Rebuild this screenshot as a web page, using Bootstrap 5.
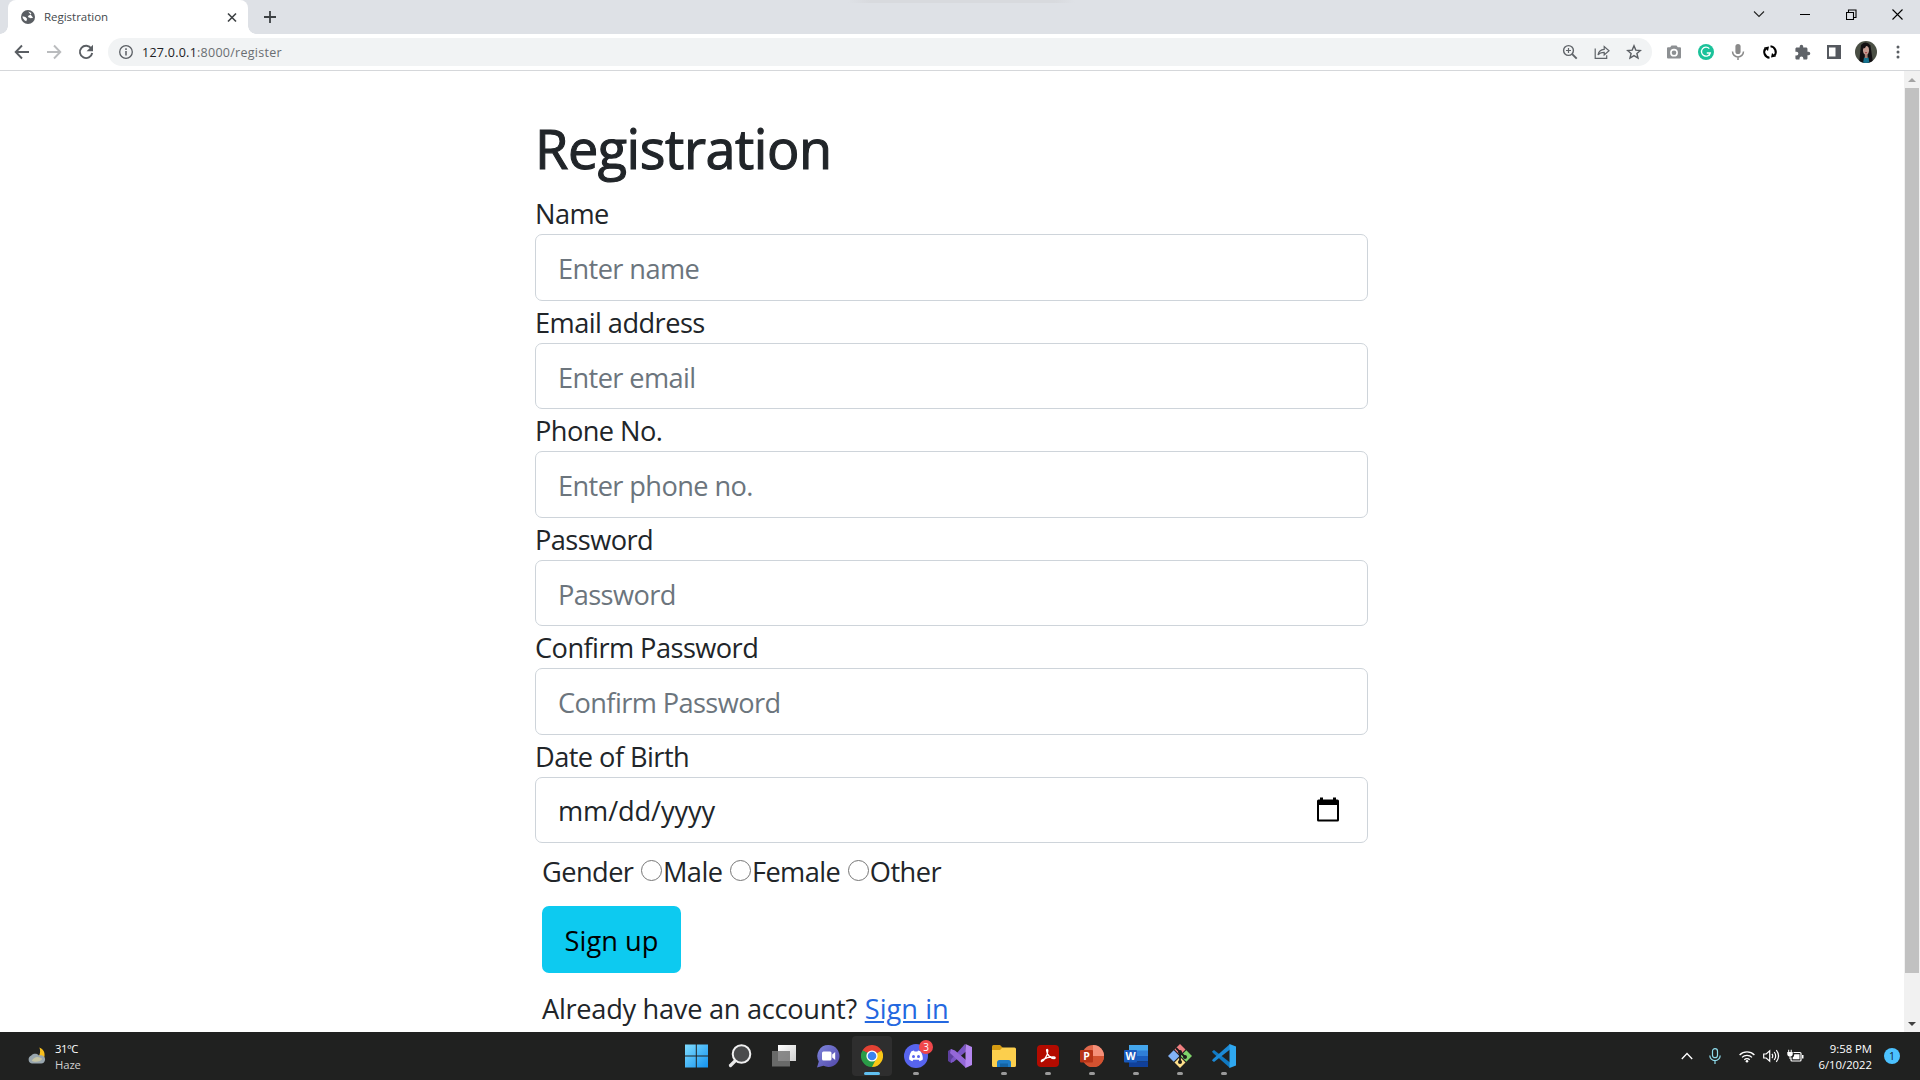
<!DOCTYPE html>
<html lang="en">
<head>
<meta charset="utf-8">
<meta name="viewport" content="width=device-width, initial-scale=1">
<title>Registration</title>
<link href="https://cdn.jsdelivr.net/npm/bootstrap@5.3.0/dist/css/bootstrap.min.css" rel="stylesheet">
<script defer src="https://cdn.jsdelivr.net/npm/bootstrap@5.3.0/dist/js/bootstrap.bundle.min.js"></script>
<style>
html,body{height:1080px;overflow:hidden}
body{font-family:"Open Sans","Noto Sans",sans-serif;color:#212529;background:#fff}
svg{display:block;flex:none}

/* browser chrome */
.tabstrip{height:34px;background:linear-gradient(90deg,transparent 848px,#d8dade 870px,#d8dade 1055px,transparent 1075px) 0 0/100% 3px no-repeat #dee1e6}
.tab-active{width:240px;height:34px;margin-left:8px;background:#fff;border-radius:8px 8px 0 0;position:relative;padding:0 11px 5px 13px}
.tab-active::before,.tab-active::after{content:"";position:absolute;bottom:0;width:8px;height:8px}
.tab-active::before{left:-8px;background:radial-gradient(circle at 0 0,transparent 7.5px,#fff 8px)}
.tab-active::after{right:-8px;background:radial-gradient(circle at 100% 0,transparent 7.5px,#fff 8px)}
.tab-title{font-size:11.5px;line-height:16px;color:#45494d;margin-left:9px;letter-spacing:-.02px}
.newtab{padding:10px 0 0 15px}
.winctl{width:46px;height:28px}
.toolbar{height:37px;border-bottom:1px solid #d5d7da;background:#fff;padding:0 6px}
.tool{width:32px;height:36px}
.omnibox{height:28px;border-radius:14px;background:#f1f3f4;margin:0 6px;padding-left:10px}
.url{font-size:12.5px;line-height:18px;color:#6a6e72;margin-left:8px;padding-top:1px;letter-spacing:.26px}
.url span{color:#202124}

/* registration page */
.viewport{height:961px}
.page{font-size:27.2px;line-height:42px;letter-spacing:-.55px;padding:40px 0 0 535px}
.formcol{width:833px}
.page h2{font-size:54px;font-weight:500;line-height:67px;letter-spacing:-.45px;padding-top:4px;margin:0 0 10px;-webkit-text-stroke:1.1px #212529}
.page label{display:block;height:42px;padding-top:1px}
.page .form-control{font-size:27.2px;line-height:42px;height:66.5px;padding:12px 22px 9px;border:1px solid #ced4da;border-radius:7px;color:#212529;letter-spacing:-.6px}
.page .form-control::placeholder{color:#6c757d;opacity:1}
.page .date-box{padding-right:27px;letter-spacing:-.1px}
.date-box svg{margin-top:-3px}
.gender{height:42px;margin:7px 7px 0;padding-top:1px}
.gender input{appearance:none;width:21px;height:21px;border:1px solid #767676;border-radius:50%;background:#fff;margin:-2px 1px 0 7.5px}
.page .btn-sign{width:139px;height:66.5px;margin:14px 7px;background:#0dcaf0;border-radius:7px;font-size:27.2px;line-height:42px;color:#000;padding:3px 0 0;letter-spacing:.03px}
.account{margin:0 7px;padding-top:1px;letter-spacing:-.28px;height:42px}
.account a{color:#2468e0;letter-spacing:.03px;margin-left:1px}
.scroller{width:16px;background:#f1f1f1;height:961px}
.arrow-box{height:17px}
.thumb{height:885px;width:14px;background:#c1c1c1}

/* taskbar */
.taskbar{height:48px;background:#202120;color:#fff}
.taskbar-side{width:674px}
.app{width:44px;height:48px;position:relative}
.app-on::before{content:"";position:absolute;left:2px;top:4px;width:40px;height:40px;border-radius:4px;background:#2e2e2e}
.app svg{position:relative}
.app::after{content:"";position:absolute;left:19px;top:40px;width:6px;height:3px;border-radius:2px;background:#9a9a9a}
.app-idle::after{display:none}
.app.app-on::after{left:14px;width:16px;background:#60c0f0}
.counter{position:absolute;left:25px;top:8px;width:14px;height:14px;border-radius:50%;background:#f0474b;font-size:10px;line-height:14px;text-align:center}
.weather{margin-left:27px}
.tasktext{font-size:11.3px;line-height:16px;padding-top:1px}
.tight{letter-spacing:-.5px}
.haze{color:#d0d0d0;letter-spacing:-.1px}
.mic{margin-left:16px}
.wifi{margin-left:18px}
.sound{margin-left:8px}
.battery{margin-left:7px}
.clock{width:68px}
.notice{width:16px;height:16px;border-radius:50%;background:#4cc2ff;color:#123;font-size:10.5px;line-height:16px;text-align:center;margin:0 20px 0 12px}
</style>
</head>
<body class="d-flex flex-column">

<header>
  <div class="tabstrip d-flex">
    <div class="tab-active d-flex align-items-end justify-content-between">
      <div class="d-flex align-items-center mb-1">
        <svg width="14" height="14" viewBox="0 0 14 14"><circle cx="7" cy="7" r="7" fill="#5a5e63"/><path d="M7.2 1.6l3.2 1.4-.8 1.8-2 .6-.7 1.500 2.7 1.4 2.5-.6M1.600 6.200l2.800.8 1.700 1.700-.8 2.600-1.600-.8-2-2.600z" fill="#fff"/></svg>
        <span class="tab-title">Registration</span>
      </div>
      <svg class="mb-1" width="10" height="14" viewBox="0 0 10 14"><path d="M1 2.500l8 8M9 2.500l-8 8" stroke="#3c4043" stroke-width="1.600"/></svg>
    </div>
    <div class="newtab"><svg width="14" height="14" viewBox="0 0 14 14"><path d="M7 1v12M1 7h12" stroke="#3c4043" stroke-width="1.800"/></svg></div>
    <div class="d-flex ms-auto">
      <div class="winctl d-flex align-items-center justify-content-center"><svg width="12" height="8" viewBox="0 0 12 8"><path d="M1 1.500l5 5 5-5" fill="none" stroke="#222" stroke-width="1.100"/></svg></div>
      <div class="winctl d-flex align-items-center justify-content-center"><svg width="10" height="10"><path d="M0 5.500h10" stroke="#000"/></svg></div>
      <div class="winctl d-flex align-items-center justify-content-center"><svg width="11" height="11"><path d="M.5 3.500h7v7h-7zM2.500 3.500v-2.500h7.500v7.500h-2.500" fill="none" stroke="#000" stroke-width="1.100"/></svg></div>
      <div class="winctl d-flex align-items-center justify-content-center"><svg width="11" height="11"><path d="M.5.5l10 10M10.500.5l-10 10" stroke="#000" stroke-width="1.100"/></svg></div>
    </div>
  </div>

  <div class="toolbar d-flex align-items-center">
    <div class="tool d-flex align-items-center justify-content-center"><svg width="16" height="16" viewBox="0 0 16 16"><path d="M15 8H2M8 1.500L1.700 8 8 14.500" fill="none" stroke="#5a5e63" stroke-width="1.900"/></svg></div>
    <div class="tool d-flex align-items-center justify-content-center"><svg width="16" height="16" viewBox="0 0 16 16"><path d="M1 8h13M8 1.500L14.300 8 8 14.500" fill="none" stroke="#babcbe" stroke-width="1.900"/></svg></div>
    <div class="tool d-flex align-items-center justify-content-center"><svg width="16" height="16" viewBox="0 0 16 16"><path d="M13.300 4.500A6.200 6.200 0 1 0 14.200 9" fill="none" stroke="#5a5e63" stroke-width="1.900"/><path d="M15 .8v6.400H8.600z" fill="#5a5e63"/></svg></div>
    <div class="omnibox d-flex align-items-center flex-grow-1">
      <svg width="16" height="16" viewBox="0 0 16 16"><circle cx="8" cy="8" r="6.300" fill="none" stroke="#5a5e63" stroke-width="1.300"/><path d="M8 7v4.500M8 4.300v1.600" stroke="#5a5e63" stroke-width="1.500"/></svg>
      <div class="url"><span>127.0.0.1</span>:8000/register</div>
      <div class="d-flex ms-auto me-0">
        <div class="tool d-flex align-items-center justify-content-center"><svg width="16" height="16" viewBox="0 0 16 16"><circle cx="6.500" cy="6.500" r="4.900" fill="none" stroke="#5f6368" stroke-width="1.400"/><path d="M10.200 10.200l4.500 4.500" stroke="#5f6368" stroke-width="1.900"/><path d="M6.500 4v5M4 6.500h5" stroke="#5f6368" stroke-width="1.200"/></svg></div>
        <div class="tool d-flex align-items-center justify-content-center"><svg width="16" height="16" viewBox="0 0 16 16"><path d="M1.200 4.500v9.800h11.500v-3M4 11c.6-3.600 2.700-5.400 6.200-5.600V2.600l4.800 4.200-4.800 4.200V8.300C7.400 8.300 5.400 9 4 11z" fill="none" stroke="#5f6368" stroke-width="1.200"/></svg></div>
        <div class="tool d-flex align-items-center justify-content-center"><svg width="16" height="16" viewBox="0 0 16 16"><path d="M8 1.800l1.800 4.300 4.600.4-3.500 3 1.100 4.600L8 11.600l-4 2.500 1.100-4.600-3.500-3 4.600-.4z" fill="none" stroke="#5a5e63" stroke-width="1.400"/></svg></div>
      </div>
      <span style="width:2px"></span>
    </div>
    <div class="tool d-flex align-items-center justify-content-center"><svg width="16" height="16" viewBox="0 0 16 16"><path d="M5.500 1.500h5l1.300 1.800H14a1 1 0 0 1 1 1v9.200a1 1 0 0 1-1 1H2a1 1 0 0 1-1-1V4.300a1 1 0 0 1 1-1h2.200z" fill="#8d9093"/><circle cx="8" cy="8.700" r="3.900" fill="#fff"/><circle cx="8" cy="8.700" r="2.300" fill="#8d9093"/></svg></div>
    <div class="tool d-flex align-items-center justify-content-center"><svg width="16" height="16" viewBox="0 0 16 16"><circle cx="8" cy="8" r="8" fill="#1bc29a"/><path d="M11.300 4.600A4.500 4.500 0 1 0 12.300 9H8.800M12.300 9l-1.300 2.600" fill="none" stroke="#fff" stroke-width="1.300"/></svg></div>
    <div class="tool d-flex align-items-center justify-content-center"><svg width="16" height="16" viewBox="0 0 16 16"><rect x="5.400" y="0" width="5.200" height="10" rx="2.600" fill="#8a8a8a"/><path d="M2.500 7.500a5.500 5.500 0 0 0 11 0M8 13v3" fill="none" stroke="#8a8a8a" stroke-width="1.500"/></svg></div>
    <div class="tool d-flex align-items-center justify-content-center"><svg width="16" height="16" viewBox="0 0 16 16"><path d="M8.500 2.300a5.700 5.700 0 0 1 4 9.200M7.500 13.700A5.700 5.700 0 0 1 3.500 4.500" fill="none" stroke="#000" stroke-width="2.100"/><path d="M2 3.600l5-1.200-1 4.600zM14 12.400l-5 1.200 1-4.600z" fill="#000"/></svg></div>
    <div class="tool d-flex align-items-center justify-content-center"><svg width="17" height="17" viewBox="0 0 24 24"><path fill="#5f6368" d="M20.500 11H19V7c0-1.100-.9-2-2-2h-4V3.500a2.500 2.500 0 0 0-5 0V5H4c-1.100 0-2 .9-2 2v3.800h1.500a2.700 2.700 0 0 1 0 5.400H2V20c0 1.100.9 2 2 2h3.800v-1.500a2.700 2.700 0 0 1 5.400 0V22H17c1.100 0 2-.9 2-2v-4h1.500a2.500 2.500 0 0 0 0-5z"/></svg></div>
    <div class="tool d-flex align-items-center justify-content-center"><svg width="14" height="14" viewBox="0 0 14 14"><path d="M0 0h14v14H0z" fill="#55595f"/><path d="M2 2.500h6.500v9H2z" fill="#fff"/></svg></div>
    <div class="tool d-flex align-items-center justify-content-center"><svg width="22" height="22" viewBox="0 0 22 22"><defs><clipPath id="face"><circle cx="11" cy="11" r="11"/></clipPath></defs><g clip-path="url(#face)"><path d="M0 0h22v22H0z" fill="#4a4f44"/><path d="M6 4Q11-1 15.500 4.500L18 22H4z" fill="#120f12"/><path d="M8 22l1-5.500h4.500L14.500 22z" fill="#16738f"/><path d="M9.800 12h2.800v5H9.800z" fill="#a47b70"/><ellipse cx="11" cy="9.300" rx="3" ry="4.200" fill="#c49c92"/><path d="M8 7.500q0-4 4-4l-2 3.500z" fill="#120f12"/><path d="M10 11.700h2" stroke="#a33b40"/></g></svg></div>
    <div class="tool d-flex align-items-center justify-content-center"><svg width="4" height="14" viewBox="0 0 4 14"><g fill="#5a5e63"><circle cx="2" cy="2" r="1.500"/><circle cx="2" cy="7" r="1.500"/><circle cx="2" cy="12" r="1.500"/></g></svg></div>
  </div>
</header>

<main class="viewport d-flex overflow-hidden">
  <div class="page flex-grow-1">
    <form class="formcol">
      <h2>Registration</h2>
      <div><label for="name">Name</label><input id="name" type="text" class="form-control" placeholder="Enter name"></div>
      <div><label for="email">Email address</label><input id="email" type="email" class="form-control" placeholder="Enter email"></div>
      <div><label for="phone">Phone No.</label><input id="phone" type="text" class="form-control" placeholder="Enter phone no."></div>
      <div><label for="pass">Password</label><input id="pass" type="password" class="form-control" placeholder="Password"></div>
      <div><label for="pass2">Confirm Password</label><input id="pass2" type="password" class="form-control" placeholder="Confirm Password"></div>
      <div>
        <label>Date of Birth</label>
        <div class="form-control date-box d-flex align-items-center justify-content-between">
          <span>mm/dd/yyyy</span>
          <svg width="24" height="25" viewBox="0 0 24 25"><path d="M4 .5h3v3H4zM17 .5h3v3h-3z" fill="#000"/><path fill-rule="evenodd" d="M2.500 2.500h19a1.500 1.500 0 0 1 1.500 1.500v19a1.500 1.500 0 0 1-1.500 1.500h-19A1.500 1.500 0 0 1 1 23V4a1.500 1.500 0 0 1 1.500-1.500zM3 8v14.500h18V8z" fill="#000"/></svg>
        </div>
      </div>
      <div class="gender d-flex align-items-center"><span>Gender</span><input type="radio" name="g" aria-label="Male"><span>Male</span><input type="radio" name="g" aria-label="Female"><span>Female</span><input type="radio" name="g" aria-label="Other"><span>Other</span></div>
      <button type="button" class="btn btn-info btn-sign d-block border-0">Sign up</button>
      <div class="account">Already have an account? <a href="#">Sign in</a></div>
    </form>
  </div>
  <div class="scroller d-flex flex-column align-items-center">
    <div class="arrow-box d-flex align-items-center"><svg width="8" height="4"><path d="M4 0l4 4H0z" fill="#a3a3a3"/></svg></div>
    <div class="thumb"></div>
    <div class="arrow-box mt-auto d-flex align-items-center"><svg width="8" height="4"><path d="M0 0h8L4 4z" fill="#404040"/></svg></div>
  </div>
</main>

<footer class="taskbar d-flex">
  <div class="taskbar-side d-flex align-items-center">
    <svg class="weather" width="20" height="18" viewBox="0 0 21 18"><path d="M13 0c6 2 7 9 3.500 14L8 12c5-1 7-7 5-12z" fill="#f7bf1c"/><path d="M5 17a4.500 4.500 0 0 1-.5-8.500C6 6 11 6 12.500 8.500 15 7.500 19 9 19 12.500c0 3-2 4.500-4 4.500z" fill="#98a6ae"/><path d="M5 14c3-5 7-5 11-2-1 3-8 4-11 2z" fill="#c5c4a4"/></svg>
    <div class="tasktext ms-2 ps-0"><div class="tight">31°C</div><div class="haze">Haze</div></div>
  </div>
  <div class="d-flex">
    <div class="app app-idle d-flex align-items-center justify-content-center"><svg width="24" height="24" viewBox="0 0 24 24"><defs><linearGradient id="win" x1="0" y1="0" x2="1" y2="1"><stop offset="0" stop-color="#7fdcff"/><stop offset="1" stop-color="#1393f0"/></linearGradient></defs><path d="M1 .5h10.800v11H1zM12.800.5H24v11H12.800zM1 12.500h10.800v11H1zM12.800 12.500H24v11H12.800z" fill="url(#win)"/></svg></div>
    <div class="app app-idle d-flex align-items-center justify-content-center"><svg width="24" height="24" viewBox="0 0 24 24"><path d="M7.500 16.500L2.500 21.500" stroke="#e8e8e8" stroke-width="3.200" stroke-linecap="round"/><circle cx="13.500" cy="10" r="8.800" fill="#4a4b4c" stroke="#f0f0f0" stroke-width="2"/></svg></div>
    <div class="app app-idle d-flex align-items-center justify-content-center"><svg width="24" height="22" viewBox="0 0 24 22"><defs><linearGradient id="tv" x2="1" y2="1"><stop stop-color="#fff"/><stop offset="1" stop-color="#cfcfcf"/></linearGradient></defs><path d="M6 0h18v16H6z" fill="url(#tv)"/><path d="M0 6h18v15.500H0z" fill="#777" opacity=".85"/></svg></div>
    <div class="app app-idle d-flex align-items-center justify-content-center"><svg width="24" height="24" viewBox="0 0 24 24"><defs><linearGradient id="ch" x2="1" y2="1"><stop stop-color="#7e86dc"/><stop offset="1" stop-color="#5146a8"/></linearGradient></defs><path d="M12.500 1a11 11 0 1 1-5 20.800L1 23.500l1.800-6A11 11 0 0 1 12.500 1z" fill="url(#ch)"/><rect x="6" y="7.500" width="9.500" height="9" rx="1.500" fill="#fff"/><path d="M16.200 10.500l3-2.500v8l-3-2.500z" fill="#fff"/></svg></div>
    <div class="app app-on d-flex align-items-center justify-content-center"><svg width="22" height="22" viewBox="0 0 22 22"><path d="M11 11L1.470 5.500A11 11 0 0 1 20.530 5.500z" fill="#e34133"/><path d="M11 11L20.530 5.500A11 11 0 0 1 11 22z" fill="#fbc716"/><path d="M11 11v11A11 11 0 0 1 1.470 5.500z" fill="#2a9c47"/><path d="M11 6h9.800L20.500 5.500H11z" fill="#e34133"/><path d="M6.700 13.500L1.470 5.500 7 8zM15.300 13.500L11 22 9.500 16z" fill="#2a9c47"/><circle cx="11" cy="11" r="5.600" fill="#fff"/><circle cx="11" cy="11" r="4.300" fill="#3b82f0"/></svg></div>
    <div class="app d-flex align-items-center justify-content-center"><svg width="24" height="24" viewBox="0 0 24 24"><circle cx="12" cy="12" r="12" fill="#5764ee"/><path d="M7.500 7.200l2.500-.7.500 1h3l.5-1 2.500.7c1.800 2.600 2.500 5.300 2.300 8.400-1 .9-2 1.300-3.200 1.600l-.9-1.500H9.300l-.9 1.500c-1.200-.3-2.200-.7-3.200-1.600-.2-3.100.5-5.800 2.300-8.400z" fill="#fff"/><circle cx="9.500" cy="12.400" r="1.500" fill="#5764ee"/><circle cx="14.500" cy="12.400" r="1.500" fill="#5764ee"/></svg><span class="counter">3</span></div>
    <div class="app app-idle d-flex align-items-center justify-content-center"><svg width="24" height="24" viewBox="0 0 24 24"><path d="M0 7l3-2 3 2v10l-3 2-3-2z" fill="#5d3f9e"/><path d="M17 0L3 15.500V19l3-1.500L18 7.500z" fill="#7a55c4"/><path d="M3 5l4 1.500L18 16v8L2 9z" fill="#9468d8"/><path d="M17.500 0L24 3v18l-6.500 3z" fill="#b587f0"/></svg></div>
    <div class="app d-flex align-items-center justify-content-center"><svg width="24" height="22" viewBox="0 0 24 22"><path d="M0 1.500Q0 0 1.500 0H8l2.500 2.500V6H0z" fill="#d59b12"/><path d="M0 5h8l2.500-2.500H22.500Q24 2.500 24 4v16.500Q24 22 22.500 22h-21Q0 22 0 20.500z" fill="#fccf4d"/><path d="M5 22v-4.500Q5 15 7.500 15h9Q19 15 19 17.500V22z" fill="#1d7ac4"/><path d="M8 18.500h8V22H8z" fill="#1463a2"/></svg></div>
    <div class="app d-flex align-items-center justify-content-center"><svg width="22" height="22" viewBox="0 0 22 22"><rect width="22" height="22" rx="4" fill="#b30b00"/><path d="M4.800 16.500C7 15.500 11 10 10.800 5.500c0-1.500-1.300-1.500-1.200 0 .2 4 3.800 8 7.600 8 1.500-.2 1.200-1.500-.5-1.600-4.300-.2-8 1-11.400 3-1.300.9-1.200 1.700-.5 1.600z" fill="none" stroke="#fff" stroke-width="1.300"/></svg></div>
    <div class="app d-flex align-items-center justify-content-center"><svg width="24" height="22" viewBox="0 0 24 22"><circle cx="13" cy="11" r="11" fill="#e2684b"/><path d="M13 0a11 11 0 0 1 11 11H13z" fill="#f59079"/><path d="M3.300 16.500A11 11 0 0 0 24 11h-11v5.500z" fill="#d35230"/><rect y="5" width="13" height="12.500" rx="1" fill="#b73417"/><text x="6.500" y="15" font-family="Open Sans,sans-serif" font-size="10.500" font-weight="700" fill="#fff" text-anchor="middle">P</text></svg></div>
    <div class="app d-flex align-items-center justify-content-center"><svg width="24" height="22" viewBox="0 0 24 22"><path d="M5 0h19v6H5z" fill="#44a6ec"/><path d="M5 5.500h19V11H5z" fill="#2f7fd8"/><path d="M5 11h19v5.500H5z" fill="#1a5cbd"/><path d="M5 16.500h19V22H5z" fill="#10409a"/><rect y="5" width="13" height="12.500" rx="1" fill="#185abd"/><text x="6.500" y="15" font-family="Open Sans,sans-serif" font-size="10.500" font-weight="700" fill="#fff" text-anchor="middle">W</text></svg></div>
    <div class="app d-flex align-items-center justify-content-center"><svg width="24" height="24" viewBox="0 0 24 24"><path d="M12 0l5.500 5.500L12 11 6.500 5.500z" fill="#ef7f80"/><path d="M18.300 6.300L24 12l-5.700 5.700L12.600 12z" fill="#7fd36b"/><path d="M12 13l5.500 5.500L12 24l-5.500-5.500z" fill="#ffe08a"/><path d="M5.700 6.300L11.400 12l-5.700 5.700L0 12z" fill="#82b2f5"/><path d="M8 4l4 4v10M12 8l5 5" fill="none" stroke="#1b1b1b" stroke-width="1.800"/><circle cx="12" cy="8" r="2" fill="#1b1b1b"/><circle cx="17" cy="13" r="2" fill="#1b1b1b"/><circle cx="12" cy="18" r="2" fill="#1b1b1b"/></svg></div>
    <div class="app d-flex align-items-center justify-content-center"><svg width="24" height="24" viewBox="0 0 24 24"><path d="M0 7.500L2 6l16 12.500V24L1 9z" fill="#1079c2"/><path d="M0 16.500L2 18 18 5.500V0L1 15z" fill="#1c8ad6"/><path d="M17.500 0L24 2.500v19L17.500 24z" fill="#2fa8f0"/></svg></div>
  </div>
  <div class="d-flex align-items-center ms-auto">
    <svg width="12" height="8" viewBox="0 0 12 8"><path d="M.8 7L6 1.500 11.200 7" fill="none" stroke="#fff" stroke-width="1.300"/></svg>
    <svg class="mic" width="12" height="16" viewBox="0 0 12 16"><rect x="3.500" y=".7" width="5" height="9" rx="2.500" fill="none" stroke="#8fdcec" stroke-width="1.200"/><path d="M.8 7.500a5.200 5.200 0 0 0 10.400 0M6 12.700V16" fill="none" stroke="#8fdcec" stroke-width="1.200"/></svg>
    <svg class="wifi" width="16" height="13" viewBox="0 0 16 13"><g fill="none" stroke="#fff" stroke-width="1.300"><path d="M.6 5a10.400 10.400 0 0 1 14.800 0"/><path d="M3 7.400a7 7 0 0 1 10 0"/><path d="M5.300 9.700a3.800 3.800 0 0 1 5.400 0"/></g><circle cx="8" cy="11.300" r="1.300" fill="#fff"/></svg>
    <svg class="sound" width="17" height="14" viewBox="0 0 17 14"><g fill="none" stroke="#fff" stroke-width="1.200"><path d="M.7 5v4h2.500l3.500 3.200V1.800L3.200 5zM9 4.800q1.500 2.200 0 4.400M11.200 3q3 4 0 8M13.300 1.200q4.500 5.800 0 11.600"/></g></svg>
    <svg class="battery" width="17" height="14" viewBox="0 0 17 14"><path d="M6.500 3.500H13q1 0 1 1v6.500q0 1-1 1H5q-1 0-1-1V8.500" fill="none" stroke="#fff" stroke-width="1.200"/><path d="M7.300 5.300h5.200v5H5.700V8.500q1.600-1 1.600-3.200z" fill="#fff"/><path d="M15 6h1.500v3.500H15z" fill="#fff"/><path d="M.3 3h5.400v2.500q0 2-2.700 2.200Q.3 7.500.3 5.500zM1.200.8h1v2.500h-1zM3.700.8h1v2.500h-1zM2.500 7h1v3h-1z" fill="#fff"/></svg>
    <div class="clock tasktext text-end"><div>9:58 PM</div><div>6/10/2022</div></div>
    <div class="notice">1</div>
  </div>
</footer>
</body>
</html>
